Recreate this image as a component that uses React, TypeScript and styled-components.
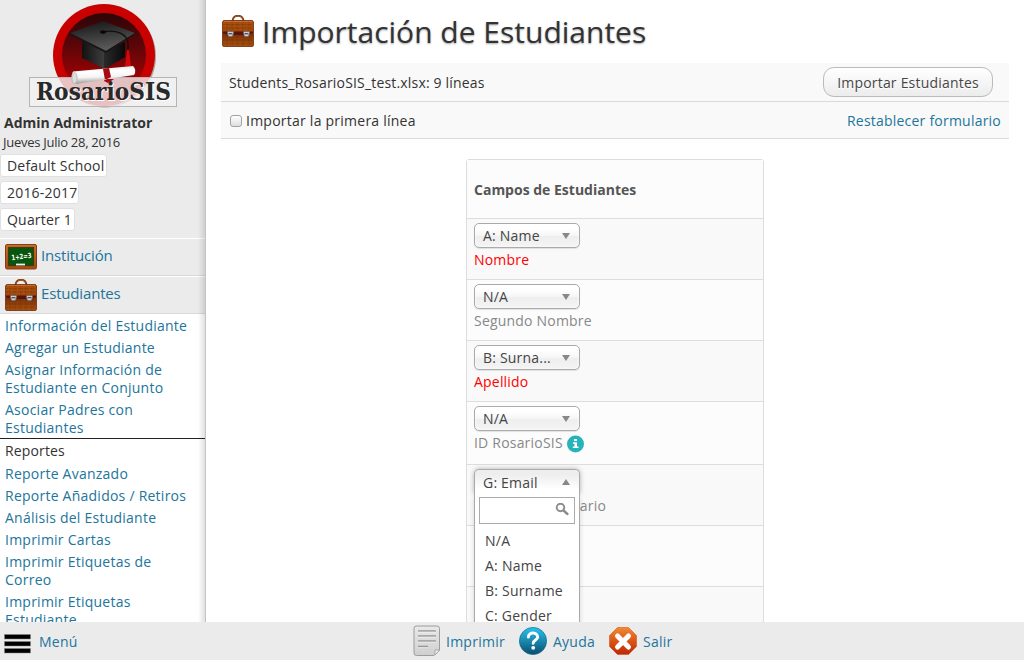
import React from "react";
import styled, { createGlobalStyle, css } from "styled-components";

const Global = createGlobalStyle`
  * { box-sizing: border-box; }
  html, body { margin: 0; padding: 0; height: 100%; overflow: hidden; background: #fff; }
  body { font-family: "Open Sans", "Noto Sans", sans-serif; font-size: 14px; color: #333; }
`;

const Page = styled.div`
  display: flex;
  flex-direction: column;
  width: 1024px;
  height: 660px;
  overflow: hidden;
`;
const Body = styled.div`
  display: flex;
  height: 622px;
  overflow: hidden;
`;

/* Side menu */
const Side = styled.aside`
  position: relative;
  flex: none;
  width: 206px;
  height: 622px;
  overflow: hidden;
  background: #ebebeb;
  border-right: 1px solid #c4c4c4;
  &::after {
    content: "";
    position: absolute;
    top: 0;
    right: 0;
    bottom: 0;
    width: 7px;
    background: linear-gradient(to right, rgba(0, 0, 0, 0), rgba(0, 0, 0, 0.12));
  }
`;
const LogoBox = styled.div`
  height: 112px;
  padding: 2px 0 0 28px;
  svg { display: block; }
`;
const UserName = styled.div`
  height: 22px;
  padding-left: 4px;
  font-weight: 700;
  line-height: 22px;
`;
const Today = styled.div`
  height: 18px;
  padding-left: 3px;
  font-size: 13px;
  line-height: 17px;
  letter-spacing: -0.27px;
`;
const Choices = styled.div`
  display: flex;
  flex-direction: column;
  align-items: flex-start;
  gap: 4px;
  height: 86px;
  padding-top: 2px;
`;
const Choice = styled.div<{ $w: number }>`
  width: ${(p) => p.$w}px;
  height: 23px;
  padding-left: 6px;
  border: 1px solid #e0e0e0;
  border-radius: 3px;
  background: #fff;
  line-height: 22px;
  letter-spacing: 0.2px;
  white-space: nowrap;
`;
const Module = styled.a`
  display: flex;
  align-items: center;
  gap: 4px;
  height: 38px;
  padding-left: 5px;
  border-top: 1px solid #fff;
  border-bottom: 1px solid #d8d8d8;
  color: #21759b;
  font-size: 15px;
  line-height: 32px;
  letter-spacing: -0.17px;
  svg { flex: none; }
  span { padding-bottom: 4px; }
`;
const Programs = styled.nav`
  display: flex;
  flex-direction: column;
  height: 320px;
  padding-top: 1px;
  background: #fff;
`;
const Program = styled.a`
  flex: none;
  padding: 2px 14px 2px 5px;
  color: #21759b;
  line-height: 18px;
  letter-spacing: 0.24px;
`;
const Section = styled.div`
  flex: none;
  height: 25px;
  margin-top: -1px;
  padding: 0 5px;
  border-top: 1px solid #222;
  line-height: 24px;
  letter-spacing: 0.15px;
`;

/* Main panel */
const Main = styled.main`
  flex: 1;
  padding: 0 15px;
  height: 622px;
  overflow: hidden;
`;
const Title = styled.h1`
  display: flex;
  align-items: center;
  gap: 8px;
  height: 63px;
  margin: 0;
  padding-left: 1px;
  font-size: 30px;
  font-weight: 400;
  line-height: 63px;
  text-shadow: 0 1px 2px rgba(0, 0, 0, 0.35);
  svg { flex: none; margin-top: -1px; }
`;
const Bar = styled.div<{ $h: number }>`
  display: flex;
  align-items: center;
  justify-content: space-between;
  height: ${(p) => p.$h}px;
  padding: 0 8px;
  border-bottom: 1px solid #dadada;
  background: #f9f9f9;
  letter-spacing: 0.18px;
`;
const SubmitButton = styled.button`
  width: 170px;
  height: 30px;
  margin-right: 8px;
  padding: 0;
  border: 1px solid #bbb;
  border-radius: 11px;
  background: linear-gradient(#fff, #ececec);
  color: #464646;
  font: 14px "Open Sans", sans-serif;
  letter-spacing: 0.2px;
  text-shadow: 0 1px 0 #fff;
`;
const CheckLabel = styled.label`
  display: flex;
  align-items: center;
  gap: 4px;
  padding-left: 1px;
  letter-spacing: 0.24px;
`;
const CheckBox = styled.span`
  width: 12px;
  height: 12px;
  margin-top: 1px;
  border: 1px solid #a2a2a2;
  border-radius: 3px;
  background: linear-gradient(#fff, #dedede);
`;
const Link = styled.a`
  color: #21759b;
  letter-spacing: 0.22px;
`;
const Table = styled.section`
  width: 298px;
  margin: 20px auto 0 245px;
  border: 1px solid #ddd;
  border-radius: 3px 3px 0 0;
`;
const TableHead = styled.div`
  height: 59px;
  padding-left: 7px;
  border-bottom: 1px solid #ddd;
  background: #fcfcfc;
  color: #555;
  font-weight: 700;
  line-height: 60px;
`;
const Row = styled.div<{ $h: number; $alt?: boolean }>`
  position: relative;
  height: ${(p) => p.$h}px;
  padding: 4px 7px 0;
  border-bottom: 1px solid #ddd;
  background: ${(p) => (p.$alt ? "#fcfcfc" : "#f9f9f9")};
`;
const SelectBox = styled.div<{ $open?: boolean }>`
  display: flex;
  align-items: center;
  justify-content: space-between;
  width: 106px;
  height: 25px;
  padding: 0 9px 0 8px;
  border: 1px solid #aaa;
  border-radius: 5px;
  background: linear-gradient(#fff 20%, #f6f6f6 50%, #eee 52%, #f4f4f4 100%);
  box-shadow: inset 0 0 3px #fff, 0 1px 1px rgba(0, 0, 0, 0.1);
  color: #444;
  letter-spacing: 0.2px;
  line-height: 25px;
  ${(p) =>
    p.$open &&
    css`
      border-bottom: 0;
      border-radius: 5px 5px 0 0;
      background: linear-gradient(#eee 20%, #fff 80%);
      box-shadow: 0 0 5px rgba(0, 0, 0, 0.3);
    `}
`;
const Arrow = styled.i<{ $up?: boolean }>`
  border: 4px solid transparent;
  border-top: ${(p) => (p.$up ? "0" : "6px solid #888")};
  border-bottom: ${(p) => (p.$up ? "6px solid #888" : "0")};
`;
const Label = styled.div<{ $required?: boolean }>`
  display: flex;
  align-items: center;
  gap: 4px;
  height: 24px;
  line-height: 24px;
  color: ${(p) => (p.$required ? "#f00" : "#888")};
  letter-spacing: 0.2px;
  svg { margin-top: 2px; }
`;
const Menu = styled.div`
  position: absolute;
  z-index: 2;
  top: 29px;
  left: 7px;
  width: 106px;
  height: 220px;
  padding: 3px 4px;
  border: 1px solid #aaa;
  border-top: 0;
  background: #fff;
  box-shadow: 0 4px 5px rgba(0, 0, 0, 0.15);
`;
const Search = styled.div`
  display: flex;
  justify-content: flex-end;
  width: 96px;
  height: 27px;
  margin-bottom: 4px;
  padding: 5px 5px 0 0;
  border: 1px solid #aaa;
`;
const Option = styled.div`
  height: 25px;
  padding-left: 6px;
  color: #444;
  line-height: 25px;
  letter-spacing: 0.24px;
  white-space: nowrap;
`;

/* Footer */
const Footer = styled.footer`
  display: flex;
  height: 38px;
  padding-left: 4px;
  background: #ebebeb;
`;
const FootItem = styled.a<{ $w: number; $gap: number; $drop?: number }>`
  display: flex;
  align-items: center;
  gap: ${(p) => p.$gap}px;
  width: ${(p) => p.$w}px;
  height: 38px;
  color: #21759b;
  letter-spacing: 0.25px;
  svg { flex: none; margin-top: ${(p) => p.$drop ?? 0}px; }
`;

const Logo = () => (
  <svg width="150" height="108" viewBox="28 2 150 108">
    <defs>
      <linearGradient id="disc" x1="0" y1="0" x2="0" y2="1">
        <stop offset="0" stopColor="#2c0507" />
        <stop offset="0.45" stopColor="#650508" />
        <stop offset="1" stopColor="#c80000" />
      </linearGradient>
      <linearGradient id="cap" x1="0" y1="0" x2="0.3" y2="1">
        <stop offset="0" stopColor="#111" />
        <stop offset="1" stopColor="#5a5a5a" />
      </linearGradient>
      <linearGradient id="base" x1="0" y1="0" x2="1" y2="0">
        <stop offset="0" stopColor="#111" />
        <stop offset="0.5" stopColor="#3c3c3c" />
        <stop offset="0.52" stopColor="#2a2a2a" />
        <stop offset="1" stopColor="#080808" />
      </linearGradient>
      <linearGradient id="scroll" x1="0" y1="0" x2="0.12" y2="1">
        <stop offset="0" stopColor="#ddd" />
        <stop offset="0.35" stopColor="#fff" />
        <stop offset="0.65" stopColor="#f4f4f4" />
        <stop offset="1" stopColor="#999" />
      </linearGradient>
    </defs>
    <circle cx="105" cy="56.5" r="51" fill="#777" opacity="0.6" />
    <circle cx="104" cy="55" r="51" fill="#c90000" />
    <circle cx="104" cy="55" r="42" fill="url(#disc)" />
    <path d="M82 40 L105 51 L125 42 V57 L105 69 L82 58Z" fill="url(#base)" />
    <path d="M70 33 L103 21 L135 33 L106 51Z" fill="url(#cap)" />
    <path d="M70 33 L106 51 L135 33 V34.5 L106 53 L70 35Z" fill="#171717" />
    <path d="M103 32 C116 29 128 34 128 44 V52" fill="none" stroke="#111" strokeWidth="1.4" />
    <ellipse cx="103" cy="32" rx="3" ry="1.7" fill="#080808" />
    <path d="M127 50 H129 L131 66 H125Z" fill="#d00909" />
    <rect x="29.5" y="77.5" width="147" height="29" fill="#f1f1f1" fillOpacity="0.8" stroke="#b5b5b5" />
    <path d="M73 71.5 L133 66 Q137 70 134 75 L76 84 Q69 79 73 71.5Z" fill="url(#scroll)" />
    <ellipse cx="74.5" cy="78" rx="2.6" ry="5.5" fill="#ddd" stroke="#aaa" strokeWidth="0.7" />
    <path d="M103 69 L109 68 L111 77 L105 80Z M105 79 L104 81 L108 83 L114 79Z" fill="#a90810" />
    <text x="37" y="101" textLength="135" lengthAdjust="spacingAndGlyphs" fontFamily="DejaVu Serif, serif" fontWeight="700" fontSize="23.5" fill="#fff">RosarioSIS</text>
    <text x="36" y="100" textLength="135" lengthAdjust="spacingAndGlyphs" fontFamily="DejaVu Serif, serif" fontWeight="700" fontSize="23.5" fill="#292929">RosarioSIS</text>
  </svg>
);

const Briefcase = () => (
  <svg width="32" height="32" viewBox="0 0 32 32">
    <defs>
      <linearGradient id="leather" x1="0" y1="0" x2="0" y2="1">
        <stop offset="0" stopColor="#a9500f" />
        <stop offset="0.4" stopColor="#a34a0c" />
        <stop offset="0.55" stopColor="#7c3208" />
        <stop offset="1" stopColor="#a9530f" />
      </linearGradient>
    </defs>
    <path d="M10.5 6 C11 -1 21 -1 21.5 6" fill="none" stroke="#7b3107" strokeWidth="2" />
    <path d="M11 5 C12 -0.5 20 -0.5 21 5" fill="none" stroke="#bd7443" strokeWidth="0.6" />
    <path d="M1.5 5.5 H30.5 L31.5 7 V30 Q31.5 31.5 30 31.5 H2 Q.5 31.5 .5 30 V7Z" fill="url(#leather)" stroke="#6d2c07" strokeWidth="0.8" />
    <path d="M1 9.5 H31 M1 13 H31 M1 25 H31 M1 29 H31 M5 6 V31 M10 6 V31 M15.5 6 V31 M21 6 V31 M27 6 V31" stroke="#612707" strokeWidth="0.7" opacity="0.5" strokeDasharray="2 1" />
    <path d="M1 16.5 H31 V18.5 L23 20 H9 L1 18.5Z" fill="#561410" />
    <path d="M2 6.5 H30" stroke="#d0763b" strokeWidth="0.8" />
    {[8.5, 24.5].map((x) => (
      <g key={x}>
        <path d={`M${x - 3} 16.5 H${x + 3} V18.5 L${x + 1.8} 21.5 H${x - 1.8} L${x - 3} 18.5Z`} fill="#cdd0d3" stroke="#646464" strokeWidth="0.6" />
        <path d={`M${x - 2} 18.7 H${x + 2}`} stroke="#444" strokeWidth="1.2" />
      </g>
    ))}
  </svg>
);

const Board = () => (
  <svg width="32" height="26" viewBox="0 0 32 26">
    <defs>
      <linearGradient id="frame" x1="0" y1="0" x2="0" y2="1">
        <stop offset="0" stopColor="#c8702e" />
        <stop offset="1" stopColor="#a64c12" />
      </linearGradient>
    </defs>
    <rect x="0.5" y="0.5" width="31" height="24.5" rx="1.5" fill="url(#frame)" stroke="#8a3c0c" />
    <rect x="3.3" y="3.3" width="25.4" height="18.4" fill="#08550d" stroke="#4b2b0b" strokeWidth="0.8" />
    <text x="6.4" y="15.2" transform="rotate(-7 16 13)" textLength="20" lengthAdjust="spacingAndGlyphs" fontFamily="DejaVu Sans, sans-serif" fontWeight="700" fontSize="7.2" fill="#fff">1+2=3</text>
    <rect x="11" y="19.6" width="9" height="1.8" fill="#eee" />
  </svg>
);

const InfoIcon = () => (
  <svg width="18" height="18" viewBox="0 0 18 18">
    <circle cx="8.5" cy="9" r="8.5" fill="#26b4ba" />
    <path d="M7 4 H10 V6 H7Z M6 7.2 H10 V11.5 H11.5 V13 H5.8 V11.5 H7.5 V8.7 H6Z" fill="#fff" />
  </svg>
);

const SearchIcon = () => (
  <svg width="14" height="14" viewBox="0 0 14 14" fill="none" stroke="#8c8c8c">
    <circle cx="5.5" cy="4.5" r="3.8" strokeWidth="1.9" />
    <path d="M8.4 7.3 L12.4 11" strokeWidth="2.4" strokeLinecap="round" />
  </svg>
);

const BurgerIcon = () => (
  <svg width="27" height="20" viewBox="0 0 27 20">
    {[0.5, 7.5, 14.5].map((y) => (
      <rect key={y} x="0.5" y={y} width="26" height="4.5" fill="#000" stroke="#888" strokeWidth="0.5" />
    ))}
  </svg>
);

const PrintIcon = () => (
  <svg width="28" height="32" viewBox="0 0 28 32">
    <defs>
      <linearGradient id="sheet" x1="0" y1="0" x2="0" y2="1">
        <stop offset="0" stopColor="#e9e9e9" />
        <stop offset="1" stopColor="#cfcfcf" />
      </linearGradient>
    </defs>
    <path d="M4 1 H25 Q27.5 1 27.5 3.5 V25 L22 30.5 H4.5 Q2 30.5 2 28 V3.5 Q2 1 4 1Z" fill="url(#sheet)" stroke="#9c9c9c" />
    <path d="M27.5 25 H23 V30Z" fill="#f8f8f8" stroke="#a4a4a4" />
    <path d="M6 6 H24 M6 11 H24 M6 16 H24 M6 21.5 H16" stroke="#969696" strokeWidth="1.3" />
    <path d="M6 7.2 H24 M6 12.2 H24 M6 17.2 H24 M6 22.7 H16" stroke="#f4f4f4" strokeWidth="0.7" />
  </svg>
);

const HelpIcon = () => (
  <svg width="28" height="28" viewBox="0 0 28 28">
    <defs>
      <linearGradient id="help" x1="0" y1="0" x2="0" y2="1">
        <stop offset="0" stopColor="#27c3f0" />
        <stop offset="1" stopColor="#0b4d6c" />
      </linearGradient>
    </defs>
    <circle cx="14" cy="14" r="13.6" fill="url(#help)" stroke="#12688c" strokeWidth="0.7" />
    <path d="M9.4 10 C9.6 4.5 18.8 4.8 18.6 10.2 C18.5 13 14.3 13 14.2 16.2" fill="none" stroke="#fff" strokeWidth="3" strokeLinecap="round" />
    <circle cx="14.2" cy="20.8" r="1.9" fill="#fff" />
  </svg>
);

const ExitIcon = () => (
  <svg width="28" height="28" viewBox="0 0 28 28">
    <defs>
      <linearGradient id="exit" x1="0" y1="0" x2="0" y2="1">
        <stop offset="0" stopColor="#f18b32" />
        <stop offset="0.5" stopColor="#dc5416" />
        <stop offset="1" stopColor="#bd2707" />
      </linearGradient>
    </defs>
    <path d="M8.5 .5 H19.5 L27.5 8.5 V19.5 L19.5 27.5 H8.5 L.5 19.5 V8.5Z" fill="url(#exit)" stroke="#ce581f" strokeWidth="0.6" />
    <path d="M8.5 9 L19.5 20 M19.5 9 L8.5 20" stroke="#fff" strokeWidth="5" strokeLinecap="round" />
  </svg>
);

const Select = ({ value, open }: { value: string; open?: boolean }) => (
  <SelectBox $open={open}>
    {value}
    <Arrow $up={open} />
  </SelectBox>
);

export default function App() {
  return (
    <Page>
      <Global />
      <Body>
        <Side>
          <LogoBox><Logo /></LogoBox>
          <UserName>Admin Administrator</UserName>
          <Today>Jueves Julio 28, 2016</Today>
          <Choices>
            <Choice $w={107}>Default School</Choice>
            <Choice $w={79}>2016-2017</Choice>
            <Choice $w={75}>Quarter 1</Choice>
          </Choices>
          <Module><Board /><span>Institución</span></Module>
          <Module><Briefcase /><span>Estudiantes</span></Module>
          <Programs>
            <Program>Información del Estudiante</Program>
            <Program>Agregar un Estudiante</Program>
            <Program>Asignar Información de<br />Estudiante en Conjunto</Program>
            <Program>Asociar Padres con<br />Estudiantes</Program>
            <Section>Reportes</Section>
            <Program>Reporte Avanzado</Program>
            <Program>Reporte Añadidos / Retiros</Program>
            <Program>Análisis del Estudiante</Program>
            <Program>Imprimir Cartas</Program>
            <Program>Imprimir Etiquetas de<br />Correo</Program>
            <Program>Imprimir Etiquetas<br />Estudiante</Program>
          </Programs>
        </Side>
        <Main>
          <Title><Briefcase />Importación de Estudiantes</Title>
          <Bar $h={39}>
            <span>Students_RosarioSIS_test.xlsx: 9 líneas</span>
            <SubmitButton>Importar Estudiantes</SubmitButton>
          </Bar>
          <Bar $h={37}>
            <CheckLabel><CheckBox />Importar la primera línea</CheckLabel>
            <Link>Restablecer formulario</Link>
          </Bar>
          <Table>
            <TableHead>Campos de Estudiantes</TableHead>
            <Row $h={61}><Select value="A: Name" /><Label $required>Nombre</Label></Row>
            <Row $h={61} $alt><Select value="N/A" /><Label>Segundo Nombre</Label></Row>
            <Row $h={61}><Select value="B: Surna..." /><Label $required>Apellido</Label></Row>
            <Row $h={63} $alt><Select value="N/A" /><Label>ID RosarioSIS <InfoIcon /></Label></Row>
            <Row $h={61}>
              <Select value="G: Email" open />
              <Label>Nombre de Usuario</Label>
              <Menu>
                <Search><SearchIcon /></Search>
                <Option>N/A</Option>
                <Option>A: Name</Option>
                <Option>B: Surname</Option>
                <Option>C: Gender</Option>
              </Menu>
            </Row>
            <Row $h={61} $alt />
            <Row $h={61} />
          </Table>
        </Main>
      </Body>
      <Footer>
        <FootItem $w={408} $gap={8} $drop={5}><BurgerIcon /><span>Menú</span></FootItem>
        <FootItem $w={107} $gap={6}><PrintIcon /><span>Imprimir</span></FootItem>
        <FootItem $w={90} $gap={6}><HelpIcon /><span>Ayuda</span></FootItem>
        <FootItem $w={90} $gap={6}><ExitIcon /><span>Salir</span></FootItem>
      </Footer>
    </Page>
  );
}
